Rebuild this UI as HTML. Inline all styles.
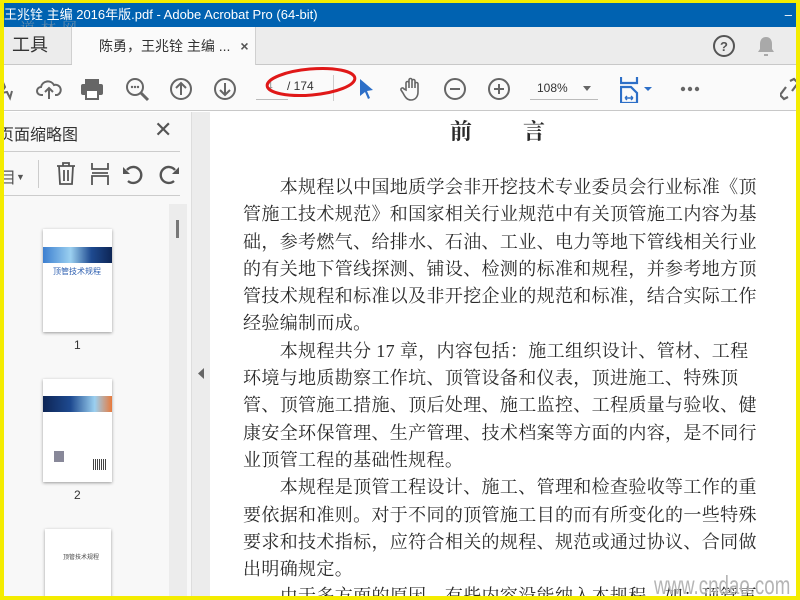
<!DOCTYPE html>
<html><head><meta charset="utf-8"><style>
*{margin:0;padding:0;box-sizing:border-box}
body{width:800px;height:600px;overflow:hidden;background:#f4ec00;position:relative;font-family:"Liberation Sans","Noto Sans CJK SC",sans-serif}
.abs{position:absolute}
#app{position:absolute;left:4px;top:3px;width:792px;height:593px;background:#fff;overflow:hidden}
#title{left:0;top:0;width:792px;height:24px;background:#0062b1;color:#fff;font-size:13px;line-height:24px;padding-left:0;white-space:nowrap}
#tabs{left:0;top:24px;width:792px;height:38px;background:#ececec;border-bottom:1px solid #c8c8c8}
#tb{left:0;top:62px;width:792px;height:46px;background:#fafafa;border-bottom:1px solid #c8c8c8}
#panel{left:0;top:109px;width:187px;height:484px;background:#f8f8f8}
#gap{left:187px;top:109px;width:19px;height:484px;background:#ececec;border-left:1px solid #ddd}
#page{left:206px;top:109px;width:586px;height:484px;background:#fff}
.doc{position:absolute;left:33px;font-family:"Liberation Serif","Noto Serif CJK SC",serif;font-size:18px;letter-spacing:0.35px;color:#2a2a2a;white-space:nowrap;line-height:27.3px}
svg{position:absolute}
</style></head><body>
<div id="app">
<div id="title" class="abs">王兆铨 主编 2016年版.pdf - Adobe Acrobat Pro (64-bit)<span style="position:absolute;right:4px;top:0">–</span></div>
<div class="abs" style="left:16px;top:14px;font-size:15px;color:#8a9aa8;opacity:.7;letter-spacing:6px;font-family:'Noto Serif CJK SC',serif">道林网</div>
<div id="tabs" class="abs">
 <div class="abs" style="left:0;top:0;width:68px;height:37px;border-right:1px solid #d0d0d0;font-size:18px;line-height:37px;color:#333;padding-left:8px">工具</div>
 <div class="abs" style="left:68px;top:0;width:184px;height:38px;background:#fafafa;border-right:1px solid #d0d0d0;font-size:14px;line-height:38px;color:#333;padding-left:27px">陈勇，王兆铨 主编 ... <span style="font-weight:bold;color:#555;margin-left:6px">×</span></div>
 <svg style="left:708px;top:7px" width="24" height="24"><circle cx="12" cy="12" r="10" fill="none" stroke="#555" stroke-width="2"/><text x="12" y="17" font-size="13" font-weight="bold" text-anchor="middle" fill="#555" font-family="Liberation Sans">?</text></svg>
 <svg style="left:752px;top:8px" width="20" height="22"><path d="M10 2c-4 0-6 3-6 7v5l-2 3h16l-2-3V9c0-4-2-7-6-7z M8 19h4v2H8z" fill="#a9a9a9"/></svg>
</div>
<div id="tb" class="abs">
 <svg style="left:-4px;top:12px" width="20" height="24"><path d="M2 3l3 7-4 6 6-1 3 6 2-7" fill="none" stroke="#666" stroke-width="2"/></svg>
 <svg style="left:32px;top:12px" width="26" height="24"><path d="M7 18H5a4 4 0 0 1 0-8 7 7 0 0 1 13-2 5 5 0 0 1 3 10h-2" fill="none" stroke="#666" stroke-width="2"/><path d="M13 22V11M9 15l4-4 4 4" fill="none" stroke="#666" stroke-width="2"/></svg>
 <svg style="left:76px;top:12px" width="24" height="24"><rect x="5" y="2" width="14" height="5" fill="#666"/><rect x="1" y="7" width="22" height="11" rx="2" fill="#666"/><rect x="6" y="13" width="12" height="9" fill="#fff" stroke="#666" stroke-width="2"/></svg>
 <svg style="left:121px;top:12px" width="26" height="26"><circle cx="10" cy="10" r="8" fill="none" stroke="#666" stroke-width="2"/><path d="M16 16l7 7" stroke="#666" stroke-width="3"/><circle cx="7" cy="10" r="1.2" fill="#666"/><circle cx="10" cy="10" r="1.2" fill="#666"/><circle cx="13" cy="10" r="1.2" fill="#666"/></svg>
 <svg style="left:165px;top:12px" width="24" height="24"><circle cx="12" cy="12" r="10" fill="none" stroke="#666" stroke-width="2"/><path d="M12 18V6M7 11l5-5 5 5" fill="none" stroke="#666" stroke-width="2"/></svg>
 <svg style="left:209px;top:12px" width="24" height="24"><circle cx="12" cy="12" r="10" fill="none" stroke="#666" stroke-width="2"/><path d="M12 6v12M7 13l5 5 5-5" fill="none" stroke="#666" stroke-width="2"/></svg>
 <div class="abs" style="left:252px;top:34px;width:32px;border-top:1px solid #bbb"></div>
 <div class="abs" style="left:262px;top:14px;font-size:12px;color:#999">4</div>
 <div class="abs" style="left:283px;top:14px;font-size:12px;color:#333">/ 174</div>
 <div class="abs" style="left:329px;top:10px;height:26px;border-left:1px solid #ccc"></div>
 <svg style="left:260px;top:0" width="96" height="34"><ellipse cx="47" cy="17" rx="44" ry="13" fill="none" stroke="#e01818" stroke-width="3" transform="rotate(-5 47 17)"/></svg>
 <svg style="left:354px;top:12px" width="18" height="24"><path d="M2 2l13 11-6 1 3 7-2 1-3-7-5 4z" fill="#2d6fc7"/></svg>
 <svg style="left:396px;top:11px" width="24" height="26"><path d="M6 14V7a1.5 1.5 0 0 1 3 0v5V4a1.5 1.5 0 0 1 3 0v8V5a1.5 1.5 0 0 1 3 0v7V8a1.5 1.5 0 0 1 3 0v8c0 5-3 8-7 8s-6-3-8-7l-2-3a1.5 1.5 0 0 1 3-1z" fill="none" stroke="#666" stroke-width="1.6"/></svg>
 <svg style="left:439px;top:12px" width="24" height="24"><circle cx="12" cy="12" r="10" fill="none" stroke="#666" stroke-width="2"/><path d="M7 12h10" stroke="#666" stroke-width="2"/></svg>
 <svg style="left:483px;top:12px" width="24" height="24"><circle cx="12" cy="12" r="10" fill="none" stroke="#666" stroke-width="2"/><path d="M7 12h10M12 7v10" stroke="#666" stroke-width="2"/></svg>
 <div class="abs" style="left:526px;top:34px;width:68px;border-top:1px solid #bbb"></div>
 <div class="abs" style="left:533px;top:16px;font-size:12px;color:#333">108%</div>
 <svg style="left:579px;top:21px" width="10" height="6"><path d="M0 0h8L4 5z" fill="#666"/></svg>
 <svg style="left:616px;top:12px" width="36" height="26"><path d="M1 0v6h16V0M1 26V10h10l6 6v10H1" fill="none" stroke="#2d6fc7" stroke-width="2.2"/><path d="M5 21h8M5 21l2-2M5 21l2 2M13 21l-2-2M13 21l-2 2" stroke="#2d6fc7" stroke-width="1.4"/><path d="M24 10h8l-4 4z" fill="#2d6fc7"/></svg>
 <svg style="left:676px;top:21px" width="22" height="6"><circle cx="3" cy="3" r="2.2" fill="#666"/><circle cx="10" cy="3" r="2.2" fill="#666"/><circle cx="17" cy="3" r="2.2" fill="#666"/></svg>
 <svg style="left:776px;top:12px" width="20" height="24"><path d="M10 4l4-2 4 4-6 8M8 20l-4 2-4-4 6-8" fill="none" stroke="#666" stroke-width="2.2"/></svg>
</div>
<div id="panel" class="abs">
 <div class="abs" style="left:-6px;top:9px;font-size:16px;color:#333">页面缩略图</div>
 <div class="abs" style="left:150px;top:5px;font-size:22px;color:#555">✕</div>
 <div class="abs" style="left:0;top:39px;width:176px;border-top:1px solid #ccc"></div>
 <div class="abs" style="left:-4px;top:52px;font-size:16px;color:#555">目<span style="font-size:9px;vertical-align:3px">▼</span></div>
 <div class="abs" style="left:34px;top:48px;height:28px;border-left:1px solid #ccc"></div>
 <svg style="left:52px;top:50px" width="20" height="24"><path d="M1 4h18M7 4V1h6v3M3 4l1 18h12l1-18M8 8v11M12 8v11" fill="none" stroke="#555" stroke-width="1.8"/></svg>
 <svg style="left:86px;top:50px" width="20" height="24"><path d="M2 1v6h16V1M2 23v-9h16v9M2 11h16" fill="none" stroke="#555" stroke-width="1.8"/></svg>
 <svg style="left:118px;top:51px" width="24" height="22"><path d="M6 18A8 8 0 1 0 5 7" fill="none" stroke="#555" stroke-width="2.4"/><path d="M1 4v7h7" fill="#555"/></svg>
 <svg style="left:152px;top:51px" width="24" height="22"><path d="M18 18A8 8 0 1 1 19 7" fill="none" stroke="#555" stroke-width="2.4"/><path d="M23 4v7h-7" fill="#555"/></svg>
 <div class="abs" style="left:0;top:83px;width:176px;border-top:1px solid #ccc"></div>
 <div class="abs" style="left:165px;top:92px;width:18px;height:392px;background:#ececec"></div>
 <div class="abs" style="left:172px;top:108px;width:3px;height:18px;background:#777"></div>
 <div class="abs" style="left:39px;top:117px;width:69px;height:103px;background:#fff;box-shadow:0 1px 3px #999">
  <div class="abs" style="left:0;top:18px;width:69px;height:16px;background:linear-gradient(90deg,#3c7fd0,#9bd0f0 40%,#1e4a90 70%,#0d2555)"></div>
  <div class="abs" style="left:10px;top:37px;font-size:8px;color:#2d5fb0;white-space:nowrap">顶管技术规程</div>
 </div>
 <div class="abs" style="left:70px;top:226px;font-size:12px;color:#333">1</div>
 <div class="abs" style="left:39px;top:267px;width:69px;height:103px;background:#fff;box-shadow:0 1px 3px #999">
  <div class="abs" style="left:0;top:17px;width:69px;height:16px;background:linear-gradient(90deg,#0d2555,#1e4a90 40%,#9bd0f0 75%,#e87a3c)"></div>
  <div class="abs" style="left:11px;top:72px;width:10px;height:11px;background:#889"></div>
  <div class="abs" style="left:50px;top:80px;width:13px;height:11px;background:repeating-linear-gradient(90deg,#444 0 1px,#fff 1px 2px)"></div>
 </div>
 <div class="abs" style="left:70px;top:376px;font-size:12px;color:#333">2</div>
 <div class="abs" style="left:41px;top:417px;width:66px;height:80px;background:#fff;box-shadow:0 1px 3px #999"><div class="abs" style="left:18px;top:23px;font-size:6px;color:#444;white-space:nowrap">顶管技术规程</div></div>
</div>
<div id="gap" class="abs"><svg style="left:6px;top:256px" width="7" height="12"><path d="M6 0v11L0 5.5z" fill="#666"/></svg></div>
<div id="page" class="abs">
 <div class="doc" style="top:6px;left:240px;font-size:22px;font-weight:bold;letter-spacing:0">前</div>
 <div class="doc" style="top:6px;left:313px;font-size:22px;font-weight:bold;letter-spacing:0">言</div>
 <div class="doc" style="top:62px">　　本规程以中国地质学会非开挖技术专业委员会行业标准《顶<br>管施工技术规范》和国家相关行业规范中有关顶管施工内容为基<br>础，参考燃气、给排水、石油、工业、电力等地下管线相关行业<br>的有关地下管线探测、铺设、检测的标准和规程，并参考地方顶<br>管技术规程和标准以及非开挖企业的规范和标准，结合实际工作<br>经验编制而成。<br>　　本规程共分 17 章，内容包括：施工组织设计、管材、工程<br>环境与地质勘察工作坑、顶管设备和仪表，顶进施工、特殊顶<br>管、顶管施工措施、顶后处理、施工监控、工程质量与验收、健<br>康安全环保管理、生产管理、技术档案等方面的内容，是不同行<br>业顶管工程的基础性规程。<br>　　本规程是顶管工程设计、施工、管理和检查验收等工作的重<br>要依据和准则。对于不同的顶管施工目的而有所变化的一些特殊<br>要求和技术指标，应符合相关的规程、规范或通过协议、合同做<br>出明确规定。<br>　　由于多方面的原因，有些内容没能纳入本规程，如：顶管事</div>
 <div class="abs" style="left:444px;top:458px;font-size:26px;color:#b5b5b5;font-family:'Liberation Sans Narrow','Liberation Sans',sans-serif;transform:scaleX(.72);transform-origin:left">www.cndao.com</div>
</div>
</div>
</body></html>
